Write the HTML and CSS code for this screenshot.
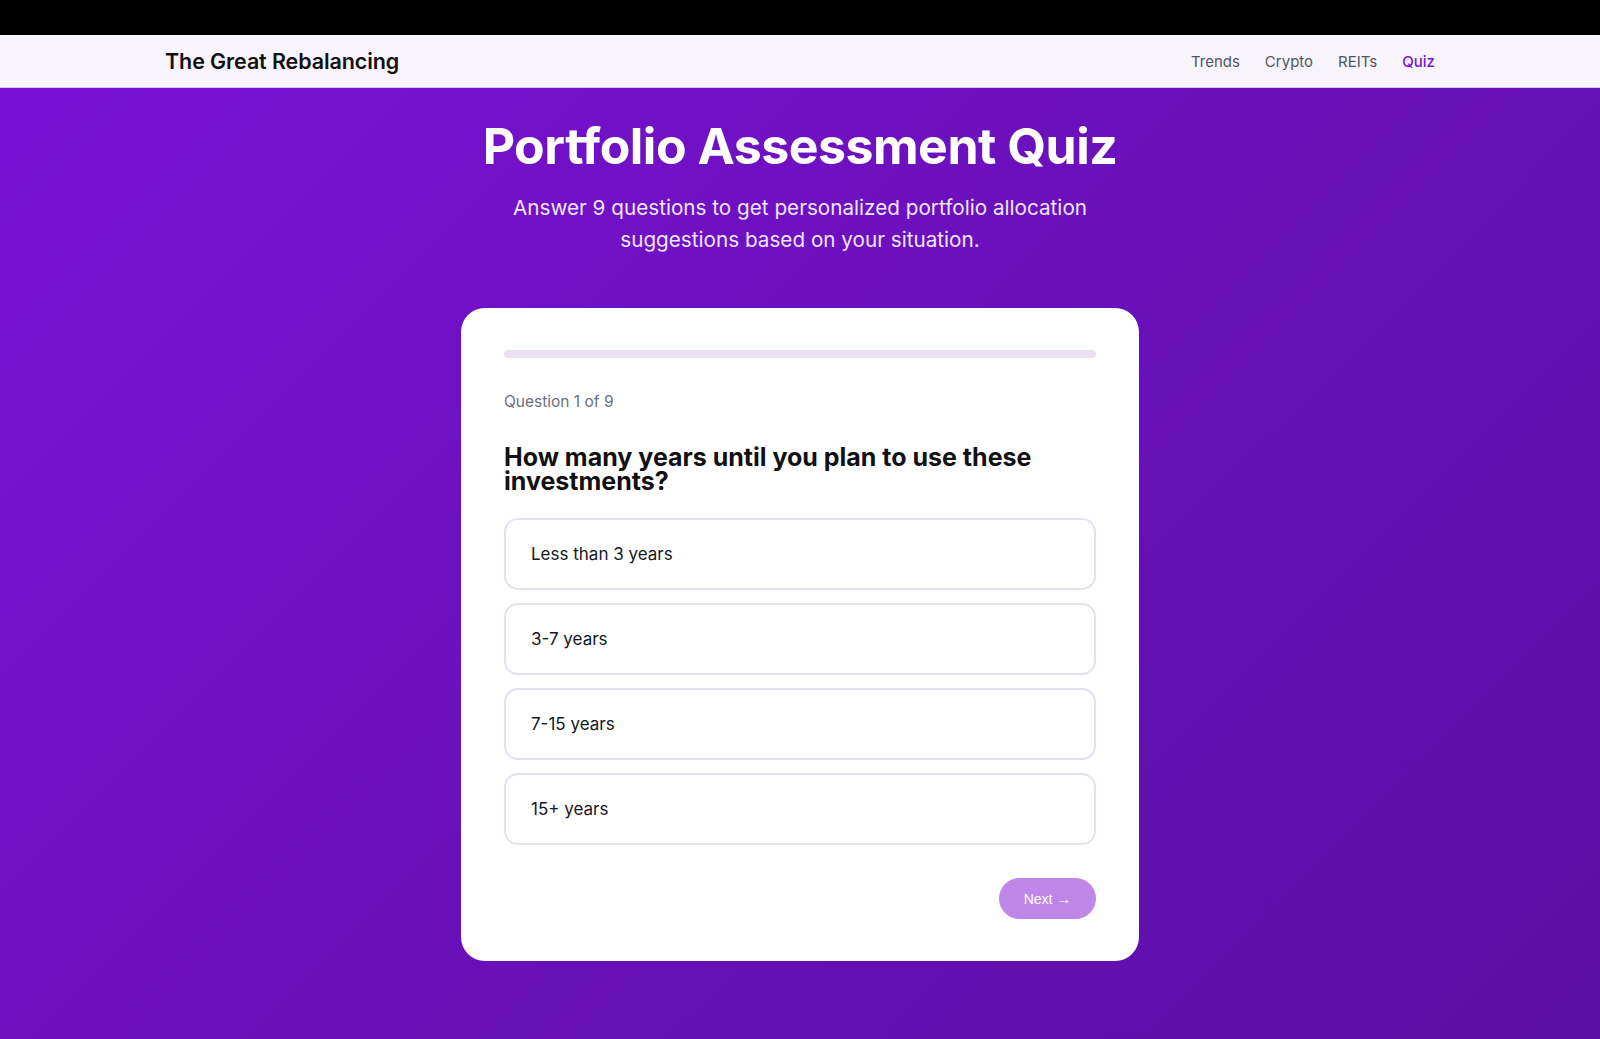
FILE: index.html
```html
<!DOCTYPE html>
<html lang="en">
  <head>
    <meta charset="UTF-8" />
    <title>Portfolio Assessment Quiz - The Great Rebalancing</title>
    <link rel="stylesheet" href="styles.css">
  </head>
  <body>
    <div class="topbar"></div>
    <nav class="nav">
      <div class="navInner">
        <a class="logo" href="#">The Great Rebalancing</a>
        <div class="links">
          <a href="#">Trends</a>
          <a href="#">Crypto</a>
          <a href="#">REITs</a>
          <a class="active" href="#">Quiz</a>
        </div>
      </div>
    </nav>
    <main class="hero">
      <h1>Portfolio Assessment Quiz</h1>
      <p class="lead">
        Answer 9 questions to get personalized portfolio allocation
        suggestions based on your situation.
      </p>

      <div class="card">
        <div class="progress"><div class="progressFill"></div></div>
        <div class="counter">Question 1 of 9</div>
        <h2>How many years until you plan to use these investments?</h2>
        <div class="options">
          <button class="option">Less than 3 years</button>
          <button class="option">3-7 years</button>
          <button class="option">7-15 years</button>
          <button class="option">15+ years</button>
        </div>
        <div class="actions">
          <button class="next" disabled>Next <span class="arrow">&rarr;</span></button>
        </div>
      </div>
    </main>
  </body>
</html>
```

FILE: styles.css
```css
html,
body {
  margin: 0;
  padding: 0;
}
body {
  font-family: "Inter", "Open Sans", sans-serif;
  background: linear-gradient(135deg, #7a13d6 0%, #6a10bb 50%, #5b0ea2 100%);
  min-height: 100vh;
  color: #111;
}
.topbar {
  height: 35px;
  background-color: #000;
}
.nav {
  background-color: #f8f4fc;
  border-bottom: 1px solid #d9c8ef;
}
.nav .navInner {
  max-width: 1270px;
  margin: 0 auto;
  height: 52px;
  display: flex;
  align-items: center;
  justify-content: space-between;
}
.nav .logo {
  font-size: 21.5px;
  font-weight: 600;
  color: #111;
  text-decoration: none;
  letter-spacing: -0.1px;
}
.nav .links {
  display: flex;
  gap: 25px;
}
.nav .links a {
  font-size: 15px;
  color: #50555f;
  text-decoration: none;
}
.nav .links a.active {
  color: #7a12d6;
  font-weight: 500;
}
.hero {
  text-align: center;
  padding: 26px 0 78px 0;
}
.hero h1 {
  color: #fff;
  font-size: 50px;
  font-weight: 700;
  margin: 0;
  line-height: 64px;
  letter-spacing: -0.5px;
}
.hero .lead {
  color: #efe4fb;
  font-size: 20.7px;
  line-height: 32px;
  max-width: 620px;
  margin: 14px auto 0 auto;
}
.card {
  width: 678px;
  box-sizing: border-box;
  margin: 52px auto 0 auto;
  background-color: #fff;
  border-radius: 24px;
  padding: 42px 43px 42px 43px;
  text-align: left;
}
.card .progress {
  height: 8px;
  border-radius: 4px;
  background-color: #e9e1f1;
  overflow: hidden;
}
.card .progressFill {
  width: 0;
  height: 100%;
  background-color: #7a12d6;
}
.card .counter {
  margin-top: 34px;
  font-size: 15.5px;
  color: #6b6f7b;
}
.card h2 {
  margin: 34px 0 25px 0;
  font-size: 25px;
  line-height: 24px;
  font-weight: 700;
  color: #111;
}
.card .options {
  display: flex;
  flex-direction: column;
  gap: 13px;
}
.card .option {
  font-family: "Inter", "Open Sans", sans-serif;
  text-align: left;
  font-size: 17px;
  color: #16181d;
  background-color: #fff;
  border: 2px solid #e6e0f0;
  border-radius: 14px;
  height: 72px;
  padding: 0 25px;
  cursor: pointer;
}
.card .actions {
  display: flex;
  justify-content: flex-end;
  margin-top: 33px;
}
.card .next {
  font-family: "Liberation Sans", Arial, sans-serif;
  font-size: 14px;
  color: #fff;
  background-color: #bf86e8;
  border: none;
  border-radius: 21px;
  width: 97px;
  height: 41px;
}
.card .next .arrow {
  font-family: "Liberation Sans", sans-serif;
  font-size: 15px;
}
```
